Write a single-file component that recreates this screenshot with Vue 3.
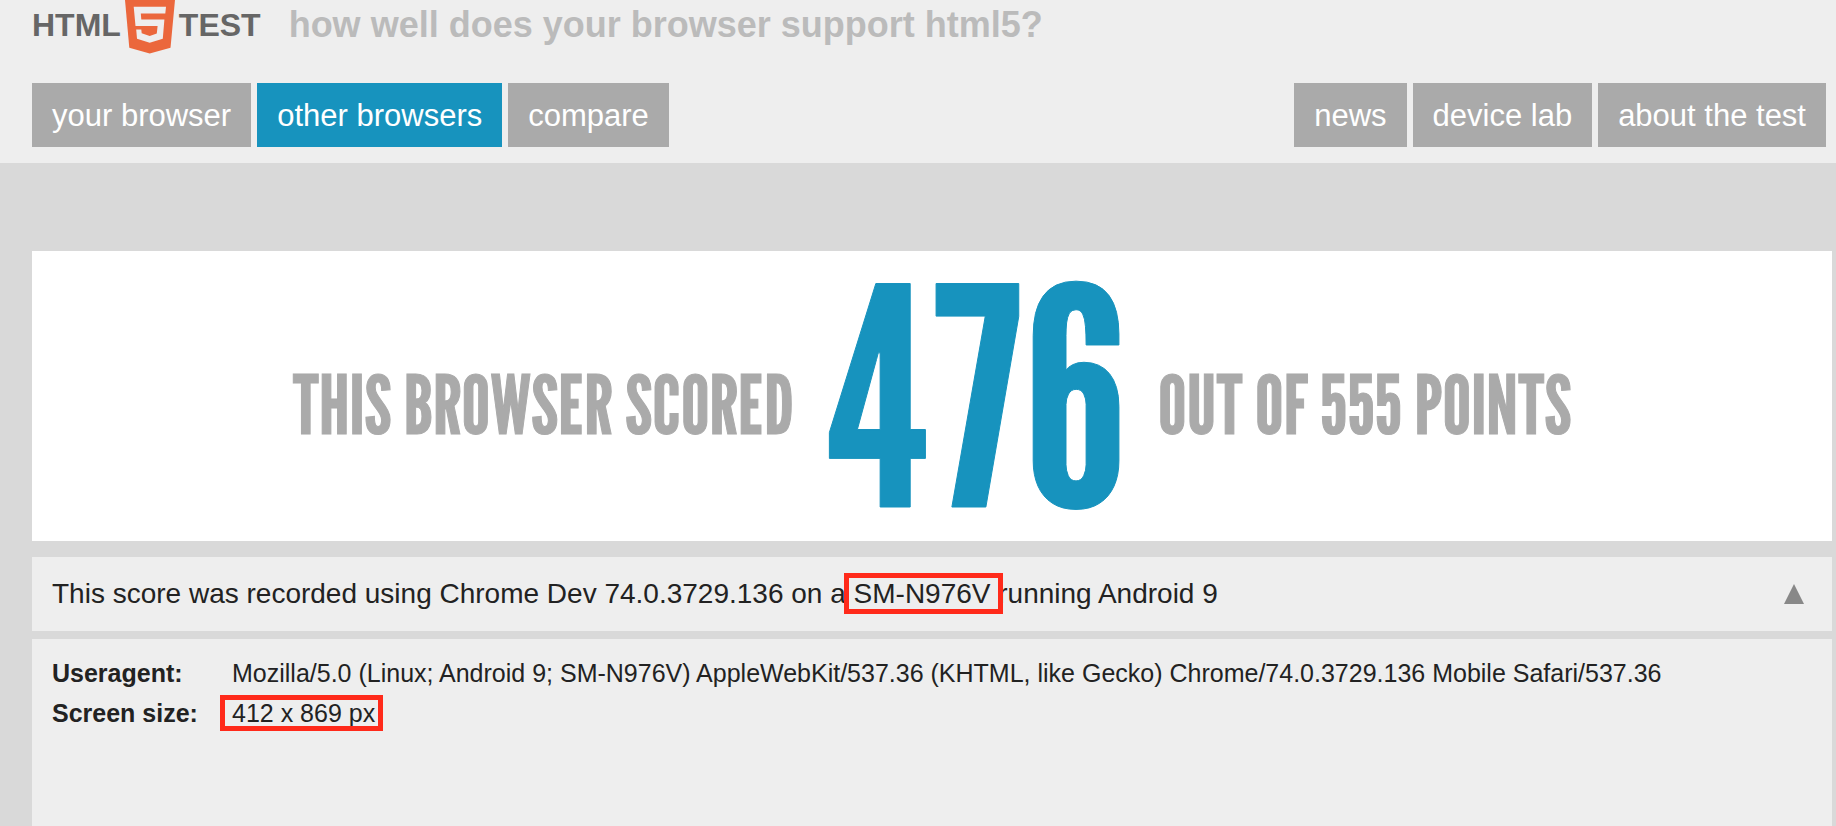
<script setup>
const mainLinks = [
  { label: 'your browser' },
  { label: 'other browsers', active: true },
  { label: 'compare' },
]
const sideLinks = [
  { label: 'news' },
  { label: 'device lab' },
  { label: 'about the test' },
]
</script>

<template>
  <div class="page">
    <header class="header">
      <div class="brand">
        <h1 class="logo">
          <span>HTML</span>
          <svg class="shield" viewBox="0 0 50 54" width="50" height="54" role="img" aria-label="5">
            <path fill="#eb673c" d="M0 0H50L45.5 47.7L24.7 53.4L4.3 47.7Z" />
            <path
              fill="#eee"
              d="M8.7 6.7H41L40.3 13.4H15.8L16.3 19.4H39.4L37.8 38.7L24.7 42.7L12 38.7L11.2 29.4H16.3L16.7 33.3L24.7 36L31.8 33.4L32.6 26H10.5Z"
            />
          </svg>
          <span>TEST</span>
        </h1>
        <p class="tagline">how well does your browser support html5?</p>
      </div>
      <nav class="nav">
        <ul class="links">
          <li v-for="link in mainLinks" :key="link.label">
            <a href="#" :class="{ active: link.active }">{{ link.label }}</a>
          </li>
        </ul>
        <ul class="links">
          <li v-for="link in sideLinks" :key="link.label">
            <a href="#">{{ link.label }}</a>
          </li>
        </ul>
      </nav>
    </header>

    <main class="content">
      <h2 class="score">
        <span>THIS BROWSER SCORED</span>
        <strong>476</strong>
        <span>OUT OF 555 POINTS</span>
      </h2>

      <section class="summary">
        <p>
          This score was recorded using Chrome Dev 74.0.3729.136 on a
          <span class="marked wide">SM-N976V</span> running Android 9
        </p>
        <button type="button" class="toggle" aria-label="Hide details">
          <svg viewBox="0 0 20 20" width="20" height="20" aria-hidden="true">
            <path fill="#888" d="M10 0L20 20H0Z" />
          </svg>
        </button>
      </section>

      <section class="details">
        <dl>
          <dt>Useragent:</dt>
          <dd>Mozilla/5.0 (Linux; Android 9; SM-N976V) AppleWebKit/537.36 (KHTML, like Gecko) Chrome/74.0.3729.136 Mobile Safari/537.36</dd>
          <dt>Screen size:</dt>
          <dd><span class="marked">412 x 869 px</span></dd>
        </dl>
      </section>
    </main>
  </div>
</template>

<style>
body {
  margin: 0;
  background: #d9d9d9;
}
</style>

<style scoped>
.page {
  display: flex;
  flex-direction: column;
  min-height: 100vh;
  color: #222;
  font-family: "Liberation Sans", Arial, sans-serif;
}
h1, h2, p, ul, dl, dd {
  margin: 0;
}
.header {
  padding: 0 10px 16px 32px;
  background: #eee;
}
.brand {
  display: flex;
  align-items: flex-start;
  gap: 28px;
  height: 83px;
}
.logo {
  display: flex;
  gap: 4px;
  color: #666;
  font-size: 32px;
  line-height: 50px;
}
.shield {
  display: block;
}
.tagline {
  color: #bbb;
  font-size: 36px;
  font-weight: bold;
  line-height: 50px;
}
.nav {
  display: flex;
  justify-content: space-between;
}
.links {
  display: flex;
  gap: 6px;
  padding: 0;
  list-style: none;
}
.links a {
  display: block;
  padding: 2px 20px 0;
  background: #aaa;
  color: #fff;
  font-size: 31px;
  line-height: 62px;
  text-decoration: none;
}
.links a.active {
  background: #1793be;
}
.content {
  display: flex;
  flex: 1;
  flex-direction: column;
  padding: 88px 4px 0 32px;
}
.score {
  display: flex;
  align-items: center;
  justify-content: center;
  gap: 30px;
  height: 290px;
  margin-bottom: 16px;
  background: #fff;
  color: #aaa;
  font-family: "League Gothic", "Oswald", "Liberation Sans Narrow", "Liberation Sans", sans-serif;
  font-size: 80px;
  font-weight: normal;
  white-space: nowrap;
  -webkit-text-stroke: 1px currentColor;
}
.score span {
  padding-top: 18px;
}
.score strong {
  color: #1793be;
  font-size: 304px;
  font-weight: normal;
  line-height: 290px;
}
.summary {
  display: flex;
  align-items: center;
  justify-content: space-between;
  margin-bottom: 8px;
  padding: 0 28px 0 20px;
  background: #eee;
  font-size: 28px;
  line-height: 74px;
}
.marked {
  position: relative;
}
.marked::after {
  position: absolute;
  inset: -4px -8px -4px -12px;
  border: 5px solid #ff2a1a;
  content: "";
}
.marked.wide::after {
  inset: -5px -12px -5px -10px;
}
.toggle {
  padding: 0;
  border: 0;
  background: none;
}
.toggle svg {
  display: block;
}
.details {
  flex: 1;
  padding: 14px 20px;
  background: #eee;
}
.details dl {
  display: grid;
  grid-template-columns: 180px 1fr;
  font-size: 25px;
  line-height: 40px;
}
.details dt {
  font-weight: bold;
}
</style>
